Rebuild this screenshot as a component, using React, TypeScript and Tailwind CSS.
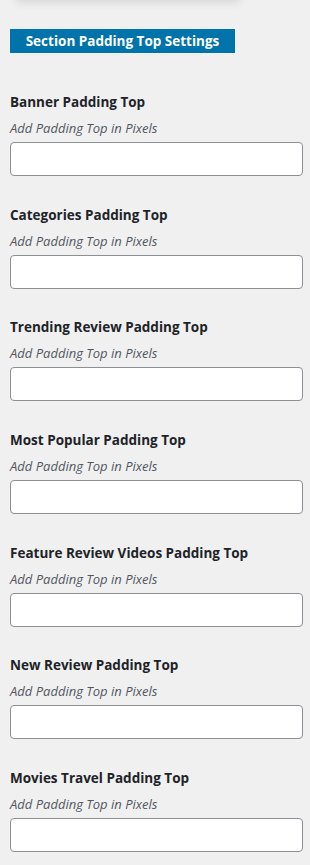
const sections = [
  'Banner Padding Top',
  'Categories Padding Top',
  'Trending Review Padding Top',
  'Most Popular Padding Top',
  'Feature Review Videos Padding Top',
  'New Review Padding Top',
  'Movies Travel Padding Top',
];

export default function App() {
  return (
    <div className="min-h-screen bg-[#f0f0f1] pl-[10px] pr-[7px] font-['Open_Sans',sans-serif] overflow-hidden">
      {/* edge of the panel above, only its shadow shows */}
      <div className="mx-[6px] w-[224px] h-[20px] -mt-[20px] bg-[#f0f0f1] rounded shadow-[0_2px_10px_rgba(0,0,0,0.12)]" />

      <div className="mt-[29px] w-[225px] h-[24px] bg-[#0073aa] text-white text-[13.5px] font-bold flex items-center justify-center">
        Section Padding Top Settings
      </div>

      <div className="mt-[38px]">
        {sections.map((title) => (
          <div key={title} className="mb-[27.67px]">
            <label className="block text-[13.5px] leading-[22px] font-bold text-[#1d2327]">{title}</label>
            <p className="mt-[5px] text-[13px] leading-[20px] italic text-[#50575e]">Add Padding Top in Pixels</p>
            <input
              type="text"
              className="mt-[4px] block w-full h-[34px] bg-white border border-[#8c8f94] rounded-[4px] px-2 text-[14px] outline-none"
            />
          </div>
        ))}
      </div>
    </div>
  );
}
